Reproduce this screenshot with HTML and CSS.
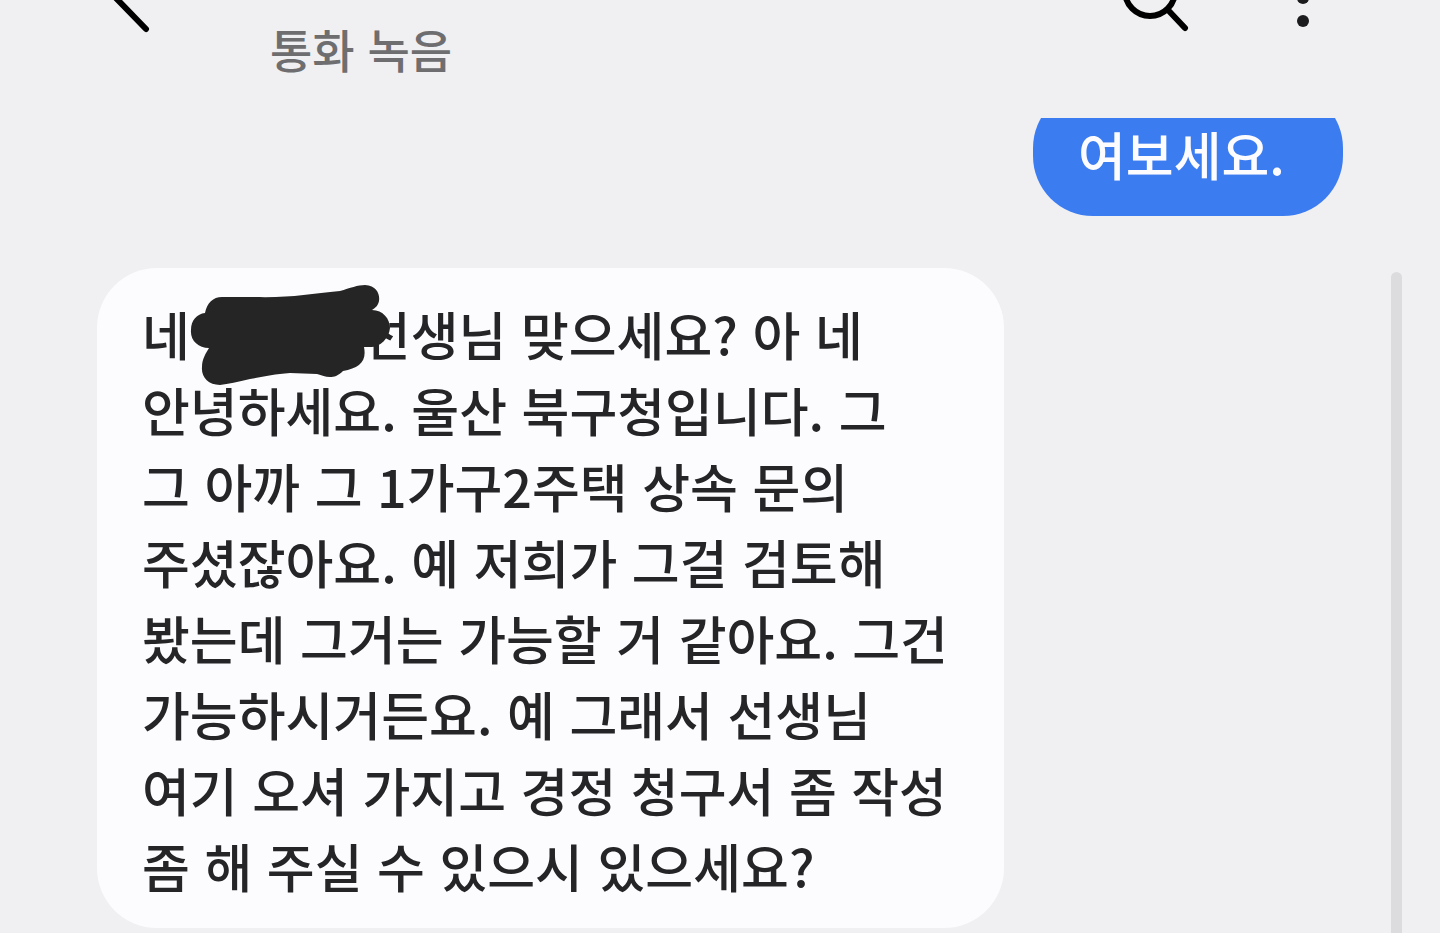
FILE: index.html
```
<!DOCTYPE html>
<html lang="ko">
<head>
  <meta charset="UTF-8" />
  <meta name="viewport" content="width=device-width, initial-scale=1.0"/>
  <title>통화 녹음</title>
  <link rel="stylesheet" href="styles.css">
</head>
<body>

  <header class="header">
    <button class="icon-button back" aria-label="뒤로">
      <svg width="60" height="36" viewBox="0 0 60 36"><path d="M11 -6 L45 29" /></svg>
    </button>
    <h1 class="title">통화 녹음</h1>
    <button class="icon-button search" aria-label="검색">
      <svg width="80" height="36" viewBox="0 0 80 36"><circle cx="41" cy="-9" r="25" /><path d="M59 10 L76 28" /></svg>
    </button>
    <button class="icon-button more" aria-label="더보기">
      <svg width="20" height="36" viewBox="0 0 20 36"><circle class="dot" cx="10" cy="-2" r="6" /><circle class="dot" cx="10" cy="21" r="6" /></svg>
    </button>
  </header>

  <main class="chat">
    <div class="messages">
      <p class="bubble sent">여보세요.</p>
      <p class="bubble received">
        네<span class="hidden-name"><svg width="212" height="110" viewBox="185 280 212 110"><path d="M205 313 C207 303 213 297 222 297 L254 297 C290 298 310 294 340 291 C350 288 358 285 365 285 C377 286 380 294 379 301 C378 306 375 308 372 310 C383 310 390 319 390 328 C389 339 379 348 370 347 L364 347 C367 362 359 368 343 371 C338 376 334 377 330 377 C325 377 322 375 317 374 L290 373 C274 374 263 377 250 379 C238 382 228 384 220 385 C208 385 201 377 202 367 C202 359 206 353 209 348 C198 348 190 340 191 330 C191 320 197 314 205 313 Z" /></svg></span>선생님 맞으세요? 아 네<br>
        안녕하세요. 울산 북구청입니다. 그<br>
        그 아까 그 1가구2주택 상속 문의<br>
        주셨잖아요. 예 저희가 그걸 검토해<br>
        봤는데 그거는 가능할 거 같아요. 그건<br>
        가능하시거든요. 예 그래서 선생님<br>
        여기 오셔 가지고 경정 청구서 좀 작성<br>
        좀 해 주실 수 있으시 있으세요?
      </p>
    </div>
    <div class="scrollbar"></div>
  </main>

</body>
</html>
```
FILE: styles.css
```
* { box-sizing: border-box; }
body { font-family: "Noto Sans CJK KR", sans-serif; font-weight: 500; background: #f0f0f2; color: #252527; margin: 0; height: 100vh; overflow: hidden; display: flex; flex-direction: column; }

.header { display: flex; align-items: flex-start; height: 118px; flex: none; padding: 0 127px 0 101px; }
.icon-button { background: none; border: none; padding: 0; cursor: pointer; }
.icon-button svg { display: block; fill: none; stroke: #000; stroke-width: 6px; stroke-linecap: round; }
.icon-button .dot { fill: #1c1c1e; stroke: none; }
.title { flex: 1; margin: 14px 0 0 109px; font-size: 46px; line-height: 68px; font-weight: 500; color: #6e6e70; }
.more { margin-left: 104px; }

.chat { flex: 1; min-height: 0; display: flex; overflow: hidden; padding-right: 38px; }
.messages { flex: 1; display: flex; flex-direction: column; gap: 52px; padding: 0 48px 0 97px; margin-top: -30px; }
.bubble { flex: none; margin: 0; padding: 28px 44px 24px 45px; border-radius: 60px; font-size: 52px; line-height: 76px; white-space: nowrap; }
.sent { align-self: flex-end; min-width: 310px; background: #3c7cf1; color: #fcfcfe; }
.received { align-self: flex-start; min-width: 907px; background: #fcfcfe; }

/* scribble over the caller's name */
.hidden-name { position: relative; display: inline-block; width: 173px; }
.hidden-name svg { position: absolute; left: -5px; bottom: -34px; fill: #252525; }

.scrollbar { width: 11px; margin-top: 154px; background: #dcdcde; border-radius: 6px 6px 0 0; }
```
